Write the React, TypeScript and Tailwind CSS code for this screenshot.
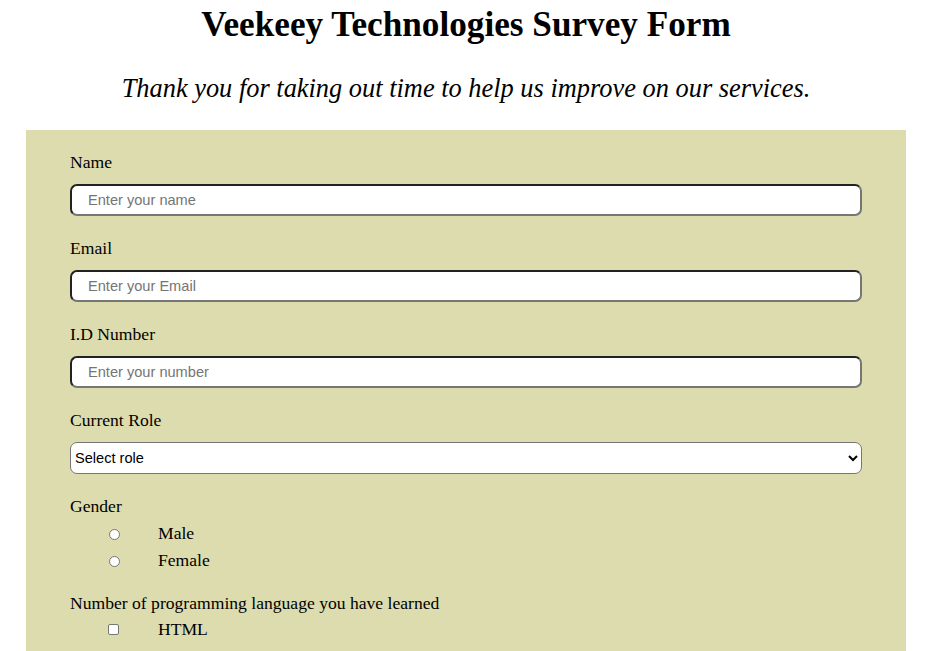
const serif = "font-['Liberation_Serif','Times_New_Roman',serif]";

type FieldProps = {
  label: string;
  placeholder: string;
  type?: string;
};

const TextField = ({ label, placeholder, type = "text" }: FieldProps) => {
  return (
    <div className="mb-[23.5px]">
      <label className="block text-[17.6px] leading-[19.5px]">{label}</label>
      <input
        type={type}
        placeholder={placeholder}
        className="mt-[11px] block h-[32px] w-full rounded-[7px] border-2 border-t-[#222] border-l-[#222] border-r-[#767676] border-b-[#767676] bg-white px-[16px] font-['Liberation_Sans',Arial,sans-serif] text-[14.6px] text-black placeholder:text-[#757575] outline-none"
      />
    </div>
  );
};

const Option = ({ kind, name, label }: { kind: "radio" | "checkbox"; name: string; label: string }) => {
  return (
    <div className="flex h-[27px] items-center">
      <input
        type={kind}
        name={name}
        className={
          kind === "radio"
            ? "ml-[39px] h-[11px] w-[11px] appearance-none rounded-full border border-[#767676] bg-white"
            : "ml-[38px] h-[11px] w-[11px] appearance-none rounded-[2px] border border-[#767676] bg-white"
        }
      />
      <span className={kind === "radio" ? "ml-[38px]" : "ml-[39px]"}>{label}</span>
    </div>
  );
};

export default function App() {
  return (
    <div className={`${serif} w-[932px] bg-white text-black`}>
      <h1 className="pt-[5px] text-center text-[35.2px] font-bold leading-[39px]">
        Veekeey Technologies Survey Form
      </h1>
      <p className="mt-[30px] text-center text-[26.4px] italic leading-[29.2px]">
        Thank you for taking out time to help us improve on our services.
      </p>
      <form className="mx-auto mt-[27px] w-[880px] bg-[#dddcae] px-[44px] pt-[23px] pb-[40px] text-[17.6px] leading-[19.5px]">
        <TextField label="Name" placeholder="Enter your name" />
        <TextField label="Email" placeholder="Enter your Email" type="email" />
        <TextField label="I.D Number" placeholder="Enter your number" type="number" />
        <div className="mb-[23.5px]">
          <label className="block">Current Role</label>
          <select className="mt-[11px] block h-[32px] w-full rounded-[7px] border border-[#767676] bg-white px-0 font-['Liberation_Sans',Arial,sans-serif] text-[14.6px] text-black">
            <option>Select role</option>
            <option>Student</option>
            <option>Full Time Job</option>
            <option>Prefer not to say</option>
          </select>
        </div>
        <div className="mb-[19px]">
          <label className="block">Gender</label>
          <div className="mt-[4px]">
            <Option kind="radio" name="gender" label="Male" />
            <Option kind="radio" name="gender" label="Female" />
          </div>
        </div>
        <div>
          <label className="block">Number of programming language you have learned</label>
          <div className="mt-[3px]">
            <Option kind="checkbox" name="lang" label="HTML" />
            <Option kind="checkbox" name="lang" label="CSS" />
            <Option kind="checkbox" name="lang" label="JavaScript" />
          </div>
        </div>
      </form>
    </div>
  );
}
